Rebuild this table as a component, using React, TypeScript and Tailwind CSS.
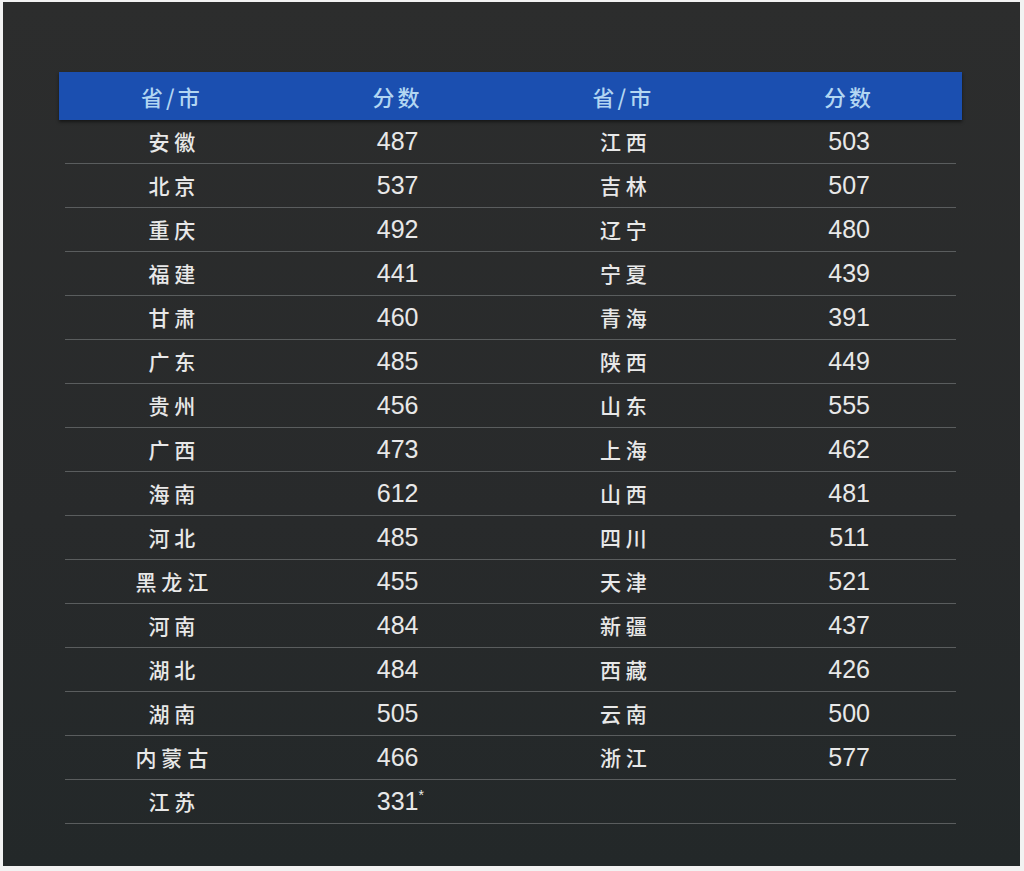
const rows: [string, string, string, string][] = [
  ["安徽", "487", "江西", "503"],
  ["北京", "537", "吉林", "507"],
  ["重庆", "492", "辽宁", "480"],
  ["福建", "441", "宁夏", "439"],
  ["甘肃", "460", "青海", "391"],
  ["广东", "485", "陕西", "449"],
  ["贵州", "456", "山东", "555"],
  ["广西", "473", "上海", "462"],
  ["海南", "612", "山西", "481"],
  ["河北", "485", "四川", "511"],
  ["黑龙江", "455", "天津", "521"],
  ["河南", "484", "新疆", "437"],
  ["湖北", "484", "西藏", "426"],
  ["湖南", "505", "云南", "500"],
  ["内蒙古", "466", "浙江", "577"],
  ["江苏", "331*", "", ""],
];

const cjk = "font-['Noto_Sans_CJK_SC',sans-serif]";
const num = "font-['Liberation_Sans',Arial,sans-serif]";

export default function App() {
  return (
    <div className="w-[1024px] h-[871px] bg-[#f2f2f2] pt-[2px] pl-[3px]">
      <div className="w-[1017px] h-[864px] bg-[linear-gradient(180deg,#2c2d2d_0%,#282a2b_60%,#232829_100%)] pt-[70px] pl-[56px]">
        <div className="w-[903px]">
          {/* Header */}
          <div className="grid grid-cols-4 h-[48px] items-center bg-[#1b4fb0] shadow-[0_2px_3px_rgba(0,0,0,0.5)]">
            {["省/市", "分数", "省/市", "分数"].map((h, i) => (
              <div
                key={i}
                className={`text-center text-[22px] font-medium tracking-[3px] text-[#b2d6f2] ${cjk}`}
              >
                {h}
              </div>
            ))}
          </div>

          {/* Body */}
          {rows.map((r, i) => (
            <div key={i} className="mx-[6px] border-b border-[#5a5d5e]">
              <div className="grid grid-cols-4 h-[43px] items-center -mx-[6px] text-[#e8e8e8]">
                <div className={`text-center text-[21px] font-medium tracking-[5px] pl-[5px] ${cjk}`}>{r[0]}</div>
                <div className={`text-center text-[25px] ${num}`}>
                  {r[1].endsWith("*") ? (
                    <span className="relative">
                      {r[1].slice(0, -1)}
                      <span className="absolute left-full -top-[2px] text-[14px]">*</span>
                    </span>
                  ) : (
                    r[1]
                  )}
                </div>
                <div className={`text-center text-[21px] font-medium tracking-[5px] pl-[5px] ${cjk}`}>{r[2]}</div>
                <div className={`text-center text-[25px] ${num}`}>{r[3]}</div>
              </div>
            </div>
          ))}
        </div>
      </div>
    </div>
  );
}
